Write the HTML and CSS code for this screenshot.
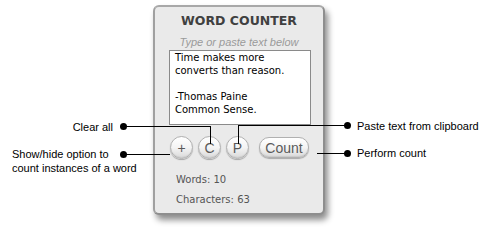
FILE: index.html
```html
<!DOCTYPE html>
<html>
<head>
<meta charset="utf-8">
<link rel="stylesheet" href="styles.css">
</head>
<body>
<div class="stage">
  <div class="panel">
    <h1 class="title">WORD COUNTER</h1>
    <p class="hint">Type or paste text below</p>
    <div class="textbox">Time makes more<br>converts than reason.<br><br>-Thomas Paine<br>Common Sense.</div>
    <div class="buttons">
      <span class="btn round">+</span>
      <span class="btn round">C</span>
      <span class="btn round">P</span>
      <span class="btn pill">Count</span>
    </div>
    <div class="stats">
      <p class="stat">Words: 10</p>
      <p class="stat">Characters: 63</p>
    </div>
  </div>

  <div class="note note-clear">Clear all</div>
  <div class="note note-show">Show/hide option to<br>count instances of a word</div>
  <div class="note note-paste">Paste text from clipboard</div>
  <div class="note note-count">Perform count</div>

  <span class="line h-clear"></span>
  <span class="line v-clear"></span>
  <span class="line h-show"></span>
  <span class="line h-paste"></span>
  <span class="line v-paste"></span>
  <span class="line h-count"></span>

  <span class="dot dot-clear"></span>
  <span class="dot dot-show"></span>
  <span class="dot dot-paste"></span>
  <span class="dot dot-count"></span>
</div>
</body>
</html>
```
FILE: styles.css
```css
html, body {
  margin: 0;
  padding: 0;
  background: #ffffff;
}

.stage {
  position: relative;
  width: 500px;
  height: 248px;
  overflow: hidden;
  padding-top: 5px;
  box-sizing: border-box;
}

.panel {
  margin-left: 153px;
  width: 172px;
  height: 210px;
  box-sizing: border-box;
  border: 2px solid #8e8e8e;
  border-top-color: #a8a8a8;
  border-left-color: #a0a0a0;
  border-radius: 6px;
  background: #eaeaea;
  box-shadow: 3px 5px 6px rgba(0, 0, 0, 0.45);
  padding: 0 10px 0 14px;
  display: flex;
  flex-direction: column;
}

.title {
  margin: 6px 0 0 -4px;
  text-align: center;
  font-family: "DejaVu Sans", sans-serif;
  font-weight: bold;
  font-size: 12.5px;
  line-height: 16px;
  color: #404040;
}

.hint {
  margin: 6px 0 0 -4px;
  text-align: center;
  font-family: "Liberation Sans", sans-serif;
  font-style: italic;
  font-size: 11px;
  line-height: 14px;
  color: #9a9a9a;
}

.textbox {
  margin-top: 1px;
  width: 142px;
  height: 82px;
  box-sizing: border-box;
  border: 1px solid #8a8a8a;
  background: #ffffff;
  padding: 0 0 0 5px;
  font-family: "DejaVu Sans", sans-serif;
  font-size: 10px;
  line-height: 13px;
  color: #000000;
}

.buttons {
  margin-top: 11px;
  display: flex;
  align-items: center;
  padding-left: 1px;
}

.btn {
  box-sizing: border-box;
  display: flex;
  align-items: center;
  justify-content: center;
  font-family: "Liberation Sans", sans-serif;
  color: #5a5a5a;
  border: 1px solid #b0b0b0;
  background: linear-gradient(#ffffff, #f4f4f4 50%, #dadada);
  box-shadow: 0 1px 1px rgba(0, 0, 0, 0.28), inset 0 -1px 1px rgba(0, 0, 0, 0.08);
}

.round {
  width: 23px;
  height: 23px;
  border-radius: 50%;
  margin-right: 5px;
  font-size: 14px;
}

.pill {
  margin-left: 5px;
  width: 50px;
  height: 21px;
  border-radius: 10px;
  font-size: 14px;
}

.stats {
  margin-top: 14px;
  padding-left: 7px;
}

.stat {
  margin: 0 0 6px 0;
  font-family: "DejaVu Sans", sans-serif;
  font-size: 10px;
  line-height: 14px;
  color: #555555;
}

.note {
  position: absolute;
  font-family: "Liberation Sans", sans-serif;
  font-size: 11px;
  line-height: 14px;
  color: #000000;
  white-space: nowrap;
}

.note-clear { right: 387px; top: 120px; text-align: right; }
.note-show  { left: 12px; top: 147px; }
.note-paste { left: 357px; top: 119px; }
.note-count { left: 357px; top: 146px; }

.dot {
  position: absolute;
  width: 7px;
  height: 7px;
  border-radius: 50%;
  background: #000000;
}

.dot-clear { left: 120px; top: 123px; }
.dot-show  { left: 120px; top: 151px; }
.dot-paste { left: 344px; top: 122px; }
.dot-count { left: 344px; top: 150px; }

.line {
  position: absolute;
  background: #000000;
}

.h-clear { left: 123px; top: 126px; width: 88px; height: 1px; }
.v-clear { left: 210px; top: 126px; width: 1px; height: 18px; }
.h-show  { left: 123px; top: 154px; width: 47px; height: 1px; }
.h-paste { left: 238px; top: 125px; width: 108px; height: 1px; }
.v-paste { left: 238px; top: 125px; width: 1px; height: 19px; }
.h-count { left: 317px; top: 153px; width: 30px; height: 1px; }
```
